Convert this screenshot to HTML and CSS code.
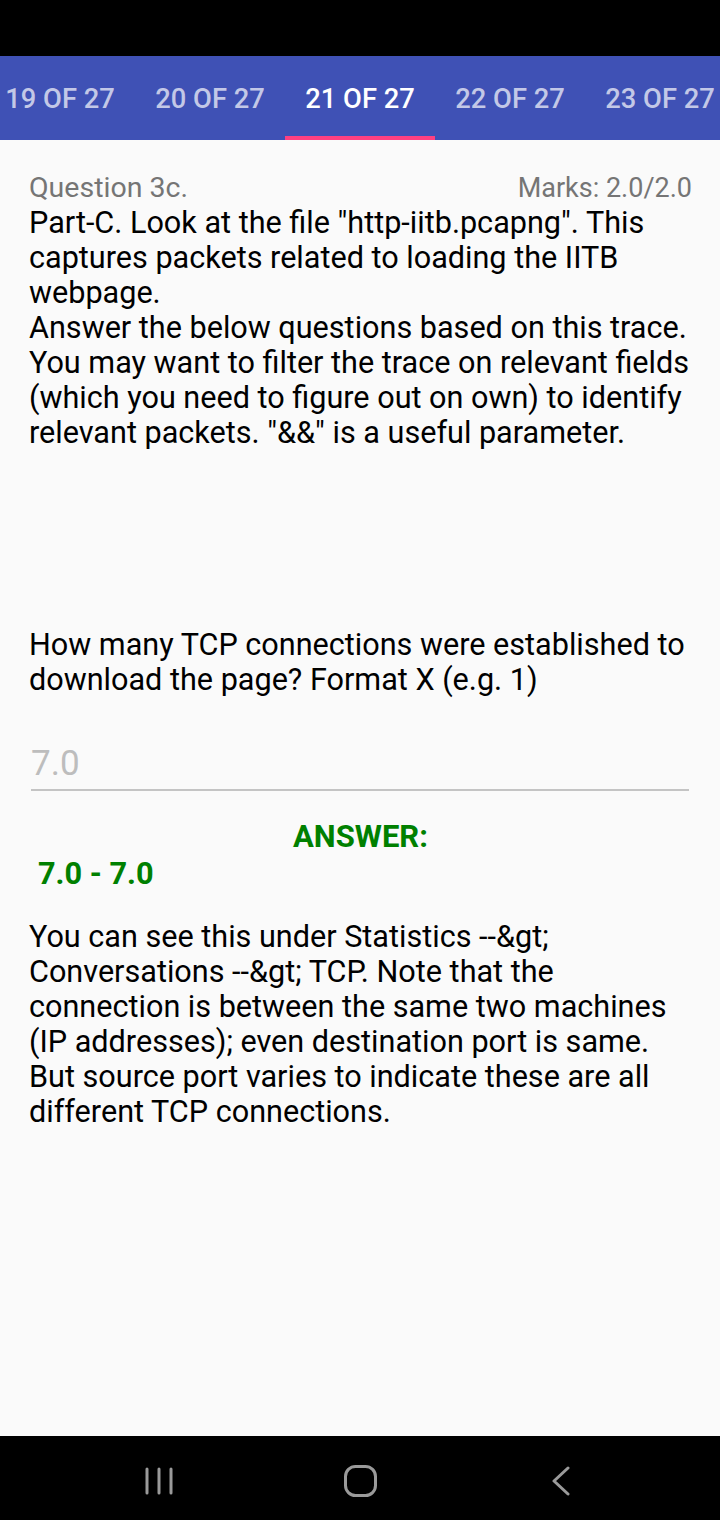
FILE: index.html
```html
<!DOCTYPE html>
<html>
<head>
<meta charset="utf-8">
<link rel="stylesheet" href="styles.css">
</head>
<body>
<div class="screen">
  <div class="statusbar"></div>
  <div class="tabbar">
    <div class="tabs">
      <div class="tab">19 OF 27</div>
      <div class="tab">20 OF 27</div>
      <div class="tab active">21 OF 27</div>
      <div class="tab">22 OF 27</div>
      <div class="tab">23 OF 27</div>
    </div>
  </div>
  <main class="content">
    <div class="qhead">
      <span class="qnum">Question 3c.</span>
      <span class="marks">Marks: 2.0/2.0</span>
    </div>
    <div class="intro">
      <p>Part-C. Look at the file "http-iitb.pcapng". This captures packets related to loading the IITB webpage.</p>
      <p>Answer the below questions based on this trace. You may want to filter the trace on relevant fields (which you need to figure out on own) to identify relevant packets. "&amp;&amp;" is a useful parameter.</p>
    </div>
    <p class="question">How many TCP connections were established to download the page? Format X (e.g. 1)</p>
    <div class="field">7.0</div>
    <div class="answer-title">ANSWER:</div>
    <div class="answer-range">7.0 - 7.0</div>
    <p class="explain">You can see this under Statistics --&amp;gt; Conversations --&amp;gt; TCP. Note that the connection is between the same two machines (IP addresses); even destination port is same. But source port varies to indicate these are all different TCP connections.</p>
  </main>
  <div class="navbar">
    <div class="nav-slot">
      <svg width="30" height="28" viewBox="0 0 30 28">
        <g stroke="#9a9a9a" stroke-width="3" stroke-linecap="round">
          <line x1="3" y1="2" x2="3" y2="26"/>
          <line x1="15" y1="2" x2="15" y2="26"/>
          <line x1="27" y1="2" x2="27" y2="26"/>
        </g>
      </svg>
    </div>
    <div class="nav-slot">
      <svg width="33" height="32" viewBox="0 0 33 32">
        <rect x="1.5" y="1.5" width="30" height="29" rx="10" fill="none" stroke="#9a9a9a" stroke-width="3"/>
      </svg>
    </div>
    <div class="nav-slot">
      <svg width="20" height="30" viewBox="0 0 20 30">
        <polyline points="17,2 3,15 17,28" fill="none" stroke="#9a9a9a" stroke-width="3" stroke-linecap="round" stroke-linejoin="round"/>
      </svg>
    </div>
  </div>
</div>
</body>
</html>
```

FILE: styles.css
```css
* { box-sizing: border-box; }
html, body { margin: 0; padding: 0; }
body {
  width: 720px;
  height: 1520px;
  background: #fafafa;
  font-family: Roboto, "Noto Sans", sans-serif;
  overflow: hidden;
}
.screen {
  display: flex;
  flex-direction: column;
  height: 1520px;
}
.statusbar {
  height: 56px;
  background: #000;
  flex: none;
}
.tabbar {
  height: 84px;
  background: #3f51b5;
  overflow: hidden;
  flex: none;
}
.tabs {
  display: flex;
  margin-left: -15px;
  height: 100%;
}
.tab {
  flex: none;
  width: 150px;
  height: 100%;
  display: flex;
  align-items: center;
  justify-content: center;
  padding-top: 6px;
  color: rgba(255,255,255,0.7);
  font-size: 27.3px;
  font-weight: 500;
  border-bottom: 4px solid transparent;
}
.tab.active {
  color: #fff;
  border-bottom-color: #ff4081;
}
.content {
  flex: 1;
  padding: 31px 28px 0 29px;
  color: #000;
}
.qhead {
  display: flex;
  justify-content: space-between;
  align-items: baseline;
  font-size: 27px;
  line-height: 34px;
  color: #757575;
}
.qnum { font-size: 28.5px; }
.intro p, .question, .explain {
  margin: 0;
  font-size: 30.6px;
  line-height: 35px;
}
.intro { margin-bottom: 177px; }
.field {
  margin: 47px 3px 0 2px;
  padding-bottom: 5px;
  border-bottom: 2px solid #c4c4c4;
  font-size: 35px;
  line-height: 40px;
  color: #bdbdbd;
}
.answer-title {
  margin-top: 28px;
  text-align: center;
  font-size: 31px;
  font-weight: 700;
  line-height: 36px;
  color: #008000;
}
.answer-range {
  margin-left: 9px;
  font-size: 30.7px;
  font-weight: 700;
  line-height: 38px;
  color: #008000;
}
.explain { margin-top: 26px; }
.navbar {
  height: 84px;
  background: #000;
  flex: none;
  display: flex;
  justify-content: center;
  align-items: center;
  padding-top: 6px;
}
.nav-slot {
  width: 201px;
  display: flex;
  justify-content: center;
}
.nav-slot svg { display: block; }
```
